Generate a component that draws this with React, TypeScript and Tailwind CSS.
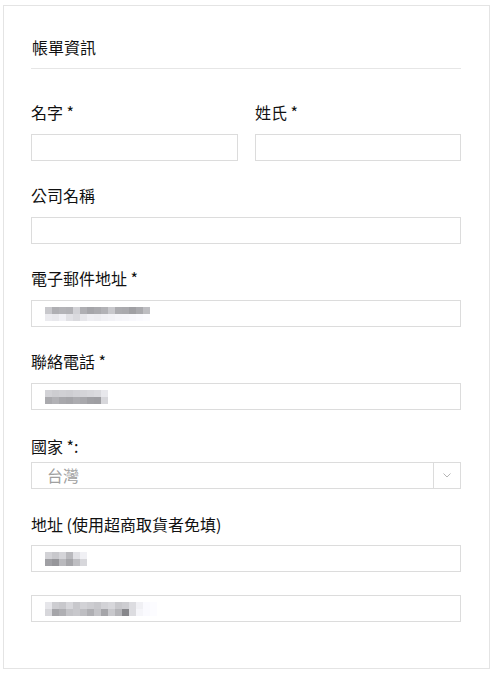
import React from 'react';

const font = { fontFamily: '"Noto Sans CJK TC", "Noto Sans", "Liberation Sans", sans-serif' };

const Label: React.FC<{ text: string; className?: string }> = ({ text, className = '' }) => (
  <div className={`h-[20px] text-[16px] leading-[20px] text-[#111] ${className}`}>{text}</div>
);

// pixelated (mosaic) placeholder for hidden personal data
const Mosaic: React.FC<{ top: string[]; bottom: string[] }> = ({ top, bottom }) => (
  <div className="flex items-center h-full pl-[13px]">
    <div className="flex flex-col blur-[0.6px]">
      {[top, bottom].map((row, r) => (
        <div key={r} className="flex h-[7px]">
          {row.map((c, i) => (
            <div key={i} className="w-[7px] h-[7px]" style={{ background: c }} />
          ))}
        </div>
      ))}
    </div>
  </div>
);

const Input: React.FC<{ children?: React.ReactNode; className?: string }> = ({ children, className = '' }) => (
  <div className={`h-[27px] border border-[#dcdcdc] bg-white ${className}`}>{children}</div>
);

const g = (v: number) => `rgb(${v},${v},${v + 4})`;

export default function App() {
  return (
    <div className="min-h-[685px] w-[500px] bg-white pt-[5px] pl-[3px]" style={font}>
      <div className="w-[487px] h-[664px] border border-[#e4e4e4] bg-white pt-[31px] pl-[27px]">
        <div className="w-[430px]">
          <div className="pb-[11px] border-b border-[#e6e6e6] text-[16px] leading-[20px] text-[#111] pl-[1px]">帳單資訊</div>

          <div className="flex gap-[17px] mt-[33px]">
            <div className="w-[207px]">
              <Label text="名字 *" />
              <Input className="mt-[12px]" />
            </div>
            <div className="w-[206px]">
              <Label text="姓氏 *" />
              <Input className="mt-[12px]" />
            </div>
          </div>

          <Label text="公司名稱" className="mt-[24px]" />
          <Input className="mt-[12px]" />

          <Label text="電子郵件地址 *" className="mt-[24px]" />
          <Input className="mt-[12px]">
            <Mosaic
              top={[g(200), g(175), g(180), g(178), g(210), g(175), g(165), g(170), g(178), g(200), g(172), g(170), g(160), g(170), g(190)]}
              bottom={[g(235), g(232), g(240), g(225), g(218), g(230), g(238), g(236), g(240), g(242), g(245), g(246), g(248), g(250), g(252)]}
            />
          </Input>

          <Label text="聯絡電話 *" className="mt-[24px]" />
          <Input className="mt-[12px]">
            <Mosaic
              top={[g(210), g(205), g(208), g(206), g(210), g(212), g(215), g(218), g(232)]}
              bottom={[g(170), g(178), g(168), g(165), g(172), g(168), g(160), g(158), g(215)]}
            />
          </Input>

          <Label text="國家 *:" className="mt-[26px]" />
          <Input className="mt-[6px] flex">
            <div className="flex-1 pl-[15px] text-[16px] leading-[25px] text-[#a0a0a0]">台灣</div>
            <div className="w-[27px] border-l border-[#dcdcdc] flex items-center justify-center">
              <svg width="8" height="5" viewBox="0 0 8 5" fill="none">
                <path d="M0.5 0.5 L4 4 L7.5 0.5" stroke="#b5b5b5" strokeWidth="1" />
              </svg>
            </div>
          </Input>

          <Label text="地址 (使用超商取貨者免填)" className="mt-[25px]" />
          <Input className="mt-[11px]">
            <Mosaic
              top={[g(210), g(200), g(212), g(185), g(225), g(240)]}
              bottom={[g(160), g(150), g(185), g(165), g(190), g(215)]}
            />
          </Input>
          <Input className="mt-[23px]">
            <Mosaic
              top={[g(230), g(205), g(200), g(215), g(200), g(210), g(205), g(200), g(210), g(215), g(200), g(205), g(220), g(240), g(250), g(252)]}
              bottom={[g(215), g(165), g(175), g(195), g(200), g(190), g(175), g(195), g(165), g(200), g(180), g(135), g(220), g(245), g(250), g(252)]}
            />
          </Input>
        </div>
      </div>
    </div>
  );
}
